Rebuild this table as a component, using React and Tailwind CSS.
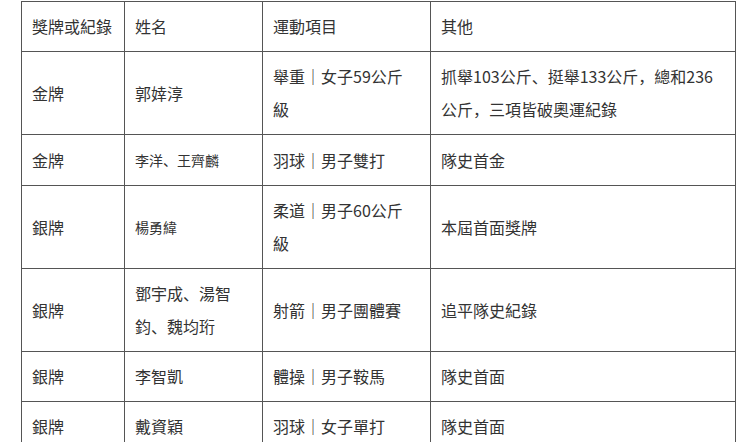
import React from "react";

const rows = [
  { a: "金牌", b: "郭婞淳", c: ["舉重｜女子59公斤", "級"], d: ["抓舉103公斤、挺舉133公斤，總和236", "公斤，三項皆破奧運紀錄"] },
  { a: "金牌", b: "李洋、王齊麟", small: true, c: ["羽球｜男子雙打"], d: ["隊史首金"] },
  { a: "銀牌", b: "楊勇緯", small: true, c: ["柔道｜男子60公斤", "級"], d: ["本屆首面獎牌"] },
  { a: "銀牌", b: ["鄧宇成、湯智", "鈞、魏均珩"], c: ["射箭｜男子團體賽"], d: ["追平隊史紀錄"] },
  { a: "銀牌", b: "李智凱", c: ["體操｜男子鞍馬"], d: ["隊史首面"] },
  { a: "銀牌", b: "戴資穎", c: ["羽球｜女子單打"], d: ["隊史首面"] },
];

function Lines({ lines }) {
  const arr = Array.isArray(lines) ? lines : [lines];
  return arr.map((l, i) => (
    <span key={i} className="block whitespace-nowrap">
      {l}
    </span>
  ));
}

const cell =
  "border border-[#555] px-[10px] py-[8px] leading-[33px] align-middle text-left font-normal";

export default function App() {
  return (
    <div
      className="w-[740px] h-[442px] overflow-hidden bg-white text-[#333] text-[16px]"
      style={{ fontFamily: '"Noto Sans CJK SC", "Noto Sans", sans-serif' }}
    >
      <table className="ml-[21px] mt-[1px] w-[714px] table-fixed border-collapse">
        <colgroup>
          <col className="w-[103px]" />
          <col className="w-[138px]" />
          <col className="w-[168px]" />
          <col className="w-[305px]" />
        </colgroup>
        <thead>
          <tr>
            <th className={cell}>獎牌或紀錄</th>
            <th className={cell}>姓名</th>
            <th className={cell}>運動項目</th>
            <th className={cell}>其他</th>
          </tr>
        </thead>
        <tbody>
          {rows.map((r, i) => (
            <tr key={i}>
              <td className={cell}>{r.a}</td>
              <td className={cell}>
                {r.small ? (
                  <span className="text-[14px]">{r.b}</span>
                ) : (
                  <Lines lines={r.b} />
                )}
              </td>
              <td className={cell}>
                <Lines lines={r.c} />
              </td>
              <td className={cell}>
                <Lines lines={r.d} />
              </td>
            </tr>
          ))}
        </tbody>
      </table>
    </div>
  );
}
